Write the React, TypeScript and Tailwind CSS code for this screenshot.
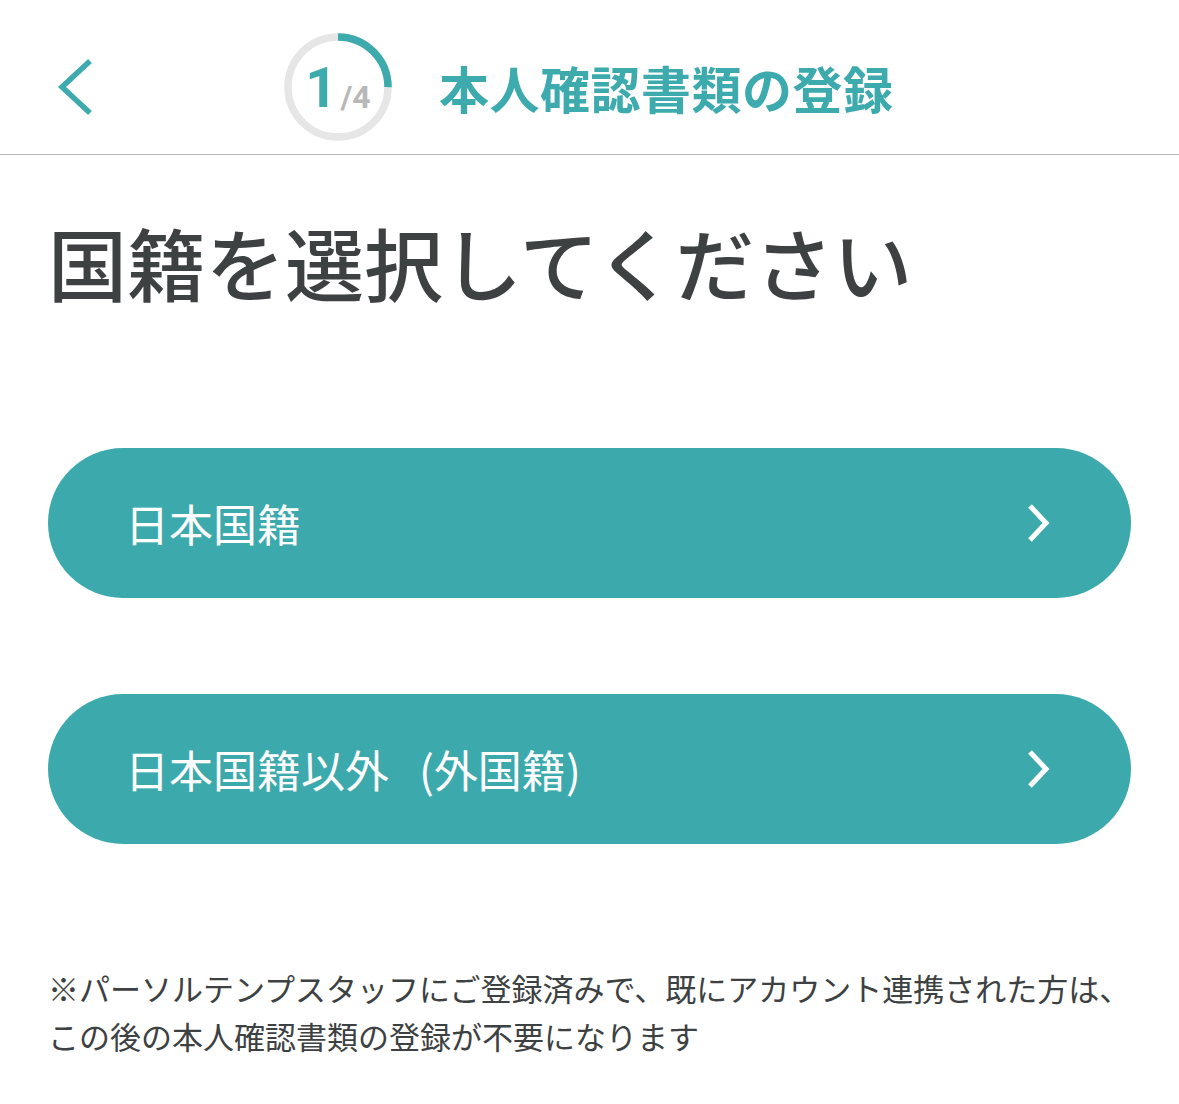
const jp = { fontFamily: '"Noto Sans CJK JP", "Noto Sans", sans-serif' };

/** 進捗リング：上から時計回りに step/total だけ色を付ける */
function StepRing({ step, total }: { step: number; total: number }) {
  const r = 50;
  const c = 2 * Math.PI * r;
  return (
    <div className="relative h-[108px] w-[108px] flex-none">
      <svg viewBox="0 0 108 108" className="h-full w-full -rotate-90">
        <circle cx="54" cy="54" r={r} fill="none" stroke="#e6e6e6" strokeWidth="7.5" />
        <circle cx="54" cy="54" r={r} fill="none" stroke="#3dabae" strokeWidth="7.5"
          strokeDasharray={`${(c * step) / total} ${c}`} />
      </svg>
      <div className="absolute inset-0 flex items-center justify-center pt-[2px]" style={{ fontFamily: 'Roboto, "Liberation Sans", sans-serif' }}>
        <span className="text-[56px] font-bold leading-none text-[#3dabae]">{step}</span>
        <span className="ml-[3px] mt-[18px] text-[32px] font-bold leading-none text-[#b8b8b8]">/{total}</span>
      </div>
    </div>
  );
}

function NationalityButton({ children }: { children: React.ReactNode }) {
  return (
    <button type="button" className="flex h-[150px] w-full items-center justify-between rounded-full bg-[#3caaad] pl-[77px] pr-[79px] text-left">
      <span className="text-[44px] leading-none text-white" style={jp}>{children}</span>
      <svg viewBox="0 0 26 40" className="h-[40px] w-[26px]" fill="none" stroke="#fff" strokeWidth="5">
        <polyline points="4,3 20,20 4,37" />
      </svg>
    </button>
  );
}

export default function App() {
  return (
    <div className="min-h-[1104px] w-[1179px] bg-white" style={jp}>
      <header className="flex h-[155px] items-center border-b border-[#b8b8b8] pl-[56px] pt-[20px]">
        <svg viewBox="0 0 40 58" className="h-[58px] w-[40px] flex-none" fill="none" stroke="#3dabae" strokeWidth="5.5">
          <polyline points="34,3 6,29 34,55" />
        </svg>
        <div className="ml-[188px]"><StepRing step={1} total={4} /></div>
        <h1 className="ml-[47px] text-[50px] font-bold leading-none tracking-[0.5px] text-[#3dabae]">本人確認書類の登録</h1>
      </header>

      <main className="px-[48px]">
        <h2 className="mt-[67px] text-[79px] font-medium leading-none text-[#3d4142]">国籍を選択してください</h2>

        <div className="mt-[147px] flex flex-col gap-[96px]">
          <NationalityButton>日本国籍</NationalityButton>
          <NationalityButton>
            日本国籍以外<span className="ml-[30px]">(</span>外国籍<span>)</span>
          </NationalityButton>
        </div>

        <p className="mt-[120px] text-[31px] leading-[48px] text-[#3d4142]">
          ※パーソルテンプスタッフにご登録済みで、既にアカウント連携された方は、<br />
          この後の本人確認書類の登録が不要になります
        </p>
      </main>
    </div>
  );
}
